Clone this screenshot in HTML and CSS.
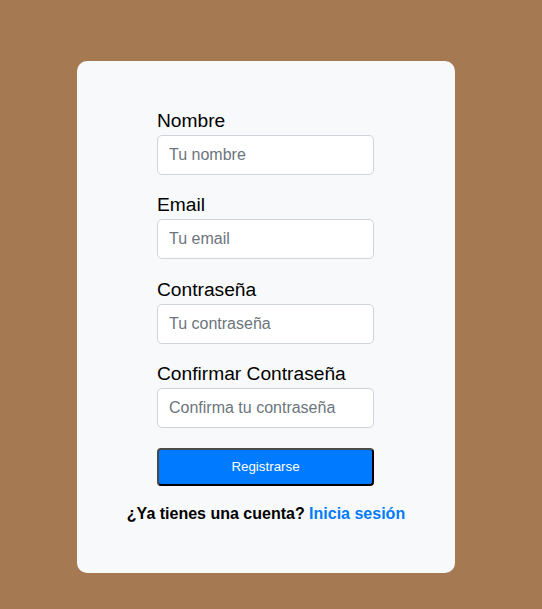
FILE: index.html
```html
<!DOCTYPE html>
<html lang="es">
<head>
<meta charset="utf-8">
<title>Registro</title>
<link rel="stylesheet" href="styles.css">
</head>
<body>
<main class="page">
  <div class="card">
    <form class="form">
      <div class="group">
        <label class="label" for="nombre">Nombre</label>
        <input class="input" id="nombre" type="text" placeholder="Tu nombre">
      </div>
      <div class="group">
        <label class="label" for="email">Email</label>
        <input class="input" id="email" type="email" placeholder="Tu email">
      </div>
      <div class="group">
        <label class="label" for="pass">Contraseña</label>
        <input class="input" id="pass" type="password" placeholder="Tu contraseña">
      </div>
      <div class="group last">
        <label class="label" for="pass2">Confirmar Contraseña</label>
        <input class="input" id="pass2" type="password" placeholder="Confirma tu contraseña">
      </div>
      <button class="btn" type="button">Registrarse</button>
    </form>
    <p class="footer">¿Ya tienes una cuenta? <a class="link" href="#">Inicia sesión</a></p>
  </div>
</main>
</body>
</html>
```

FILE: styles.css
```css
html, body {
  margin: 0;
  padding: 0;
  background: #a57a53;
  font-family: "Liberation Sans", Arial, sans-serif;
}

.page {
  padding: 61px 0 36px 77px;
}

.card {
  width: 378px;
  box-sizing: border-box;
  background: #f8f9fa;
  border-radius: 10px;
  padding: 49px 0 50px;
}

.form {
  width: 217px;
  margin: 0 81px 0 80px;
}

.group {
  margin-bottom: 19.33px;
}

.group.last {
  margin-bottom: 20px;
}

.label {
  display: block;
  font-size: 19.2px;
  line-height: 22px;
  color: #000;
  margin-bottom: 3px;
}

.input {
  display: block;
  width: 100%;
  box-sizing: border-box;
  height: 40px;
  padding: 0 11px;
  font-family: "Liberation Sans", Arial, sans-serif;
  font-size: 16px;
  color: #212529;
  background: #fff;
  border: 1px solid #ced4da;
  border-radius: 5px;
  outline: none;
}

.input::placeholder {
  color: #6c757d;
}

.btn {
  display: block;
  width: 100%;
  height: 38px;
  box-sizing: border-box;
  background: #007bff;
  color: #fff;
  font-family: "Liberation Sans", Arial, sans-serif;
  font-size: 13.333px;
  border-width: 2px;
  border-style: solid;
  border-color: #4a4a4a #000 #000 #4a4a4a;
  border-radius: 4px;
  padding: 0;
}

.footer {
  margin: 19.5px 0 0;
  text-align: center;
  font-size: 16px;
  line-height: 18px;
  font-weight: bold;
  color: #000;
}

.link {
  color: #007bff;
  text-decoration: none;
}
```
